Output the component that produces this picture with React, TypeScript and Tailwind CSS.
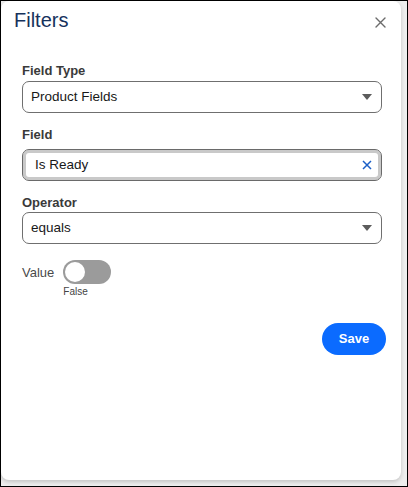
const font = { fontFamily: '"Liberation Sans", Arial, sans-serif' };

function Caret() {
  return (
    <svg width="10" height="6" viewBox="0 0 10 6" className="shrink-0">
      <polygon points="0,0 10,0 5,6" fill="#5c5c5c" />
    </svg>
  );
}

function SelectBox({ value }: { value: string }) {
  return (
    <div className="flex h-[32px] w-[360px] items-center justify-between rounded-[7px] border border-[#6f6f6f] bg-white pl-[8px] pr-[9px]">
      <span className="text-[13.5px] leading-4 text-[#181818]">{value}</span>
      <Caret />
    </div>
  );
}

function Label({ children, className = '' }: { children: string; className?: string }) {
  return <div className={`text-[13px] font-bold leading-4 text-[#3a3a3a] ${className}`}>{children}</div>;
}

export default function App() {
  return (
    <div style={font} className="h-[487px] w-[408px] overflow-hidden border border-black bg-[#eeeeee]">
      <div className="flex h-[479px] w-[400px] flex-col rounded-lg bg-white shadow-[0_2px_4px_rgba(0,0,0,0.18)]">
        {/* Header */}
        <div className="flex items-start justify-between pl-[13px] pr-[15px] pt-[7px]">
          <h2 className="text-[20px] leading-6 text-[#16325c]">Filters</h2>
          <button className="mt-[9px] p-0">
            <svg width="11" height="11" viewBox="0 0 11 11">
              <path d="M1 1 L10 10 M10 1 L1 10" stroke="#6b6b6b" strokeWidth="1.4" strokeLinecap="round" />
            </svg>
          </button>
        </div>

        {/* Body */}
        <div className="flex flex-col pl-[21px]">
          <Label className="mt-[31px]">Field Type</Label>
          <div className="mt-[2px]">
            <SelectBox value="Product Fields" />
          </div>

          <Label className="mt-[14px]">Field</Label>
          <div className="mt-[6px] flex h-[32px] w-[360px] items-center justify-between rounded-[7px] border border-[#6a6a6a] bg-white pl-[12px] pr-[9px] shadow-[inset_0_0_0_3px_#c9c9c9]">
            <span className="text-[13.5px] leading-4 text-[#181818]">Is Ready</span>
            <svg width="10" height="10" viewBox="0 0 10 10">
              <path d="M1 1 L9 9 M9 1 L1 9" stroke="#1b5fc7" strokeWidth="1.5" />
            </svg>
          </div>

          <Label className="mt-[14px]">Operator</Label>
          <div className="mt-[1px]">
            <SelectBox value="equals" />
          </div>

          <div className="mt-[16px] flex items-start gap-[9px]">
            <span className="mt-[5px] text-[13px] leading-4 text-[#4a4a4a]">Value</span>
            <div className="flex flex-col">
              <div className="flex h-[24px] w-[48px] items-center rounded-full bg-[#9b9b9b] p-[2px]">
                <div className="h-[20px] w-[20px] rounded-full bg-white" />
              </div>
              <span className="mt-[2px] text-[10px] leading-3 text-[#444444]">False</span>
            </div>
          </div>
        </div>

        <div className="mt-[25px] flex justify-end pr-[15px]">
          <button className="h-[32px] w-[64px] rounded-full bg-[#0b6bff] text-[13px] font-bold text-white">
            Save
          </button>
        </div>
      </div>
    </div>
  );
}
